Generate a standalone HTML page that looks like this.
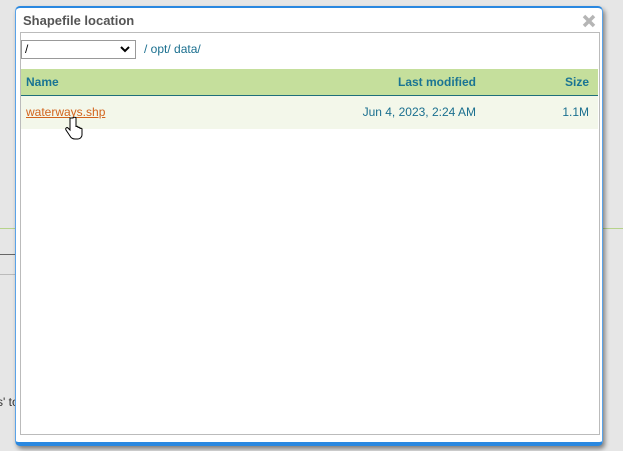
<!DOCTYPE html>
<html><head><style>
body{margin:0;width:623px;height:451px;background:#e6e6e6;position:relative;overflow:hidden;font-family:"Liberation Sans",sans-serif;}
.abs{position:absolute}
.r{text-align:right}
</style></head><body>
<div class="abs" style="left:0;top:228px;width:623px;height:1px;background:#b6d38b"></div>
<div class="abs" style="left:0;top:254px;width:20px;height:1px;background:#666"></div>
<div class="abs" style="left:0;top:274px;width:20px;height:1px;background:#bbb"></div>
<div class="abs" style="left:-3px;top:395px;font-size:12px;color:#333">s' to</div>

<div class="abs" style="left:15px;top:6px;width:586px;height:434px;background:#fff;border-top:2px solid #2a88e0;border-bottom:4px solid #2a88e0;border-left:1px solid #5aa3e8;border-right:1px solid #5aa3e8;border-radius:5px;box-shadow:2px 3px 5px rgba(0,0,0,.45)"></div>
<div class="abs" style="left:23px;top:13px;font-size:13px;font-weight:bold;color:#555">Shapefile location</div>
<svg class="abs" style="left:582px;top:14px" width="14" height="14"><path d="M2 2L12 12M12 2L2 12" stroke="#b5b5b5" stroke-width="3.5"/></svg>
<div class="abs" style="left:20px;top:32px;width:578px;height:401px;border:1px solid #bbb;background:#fff"></div>
<div class="abs" style="left:21px;top:40px;width:113px;height:17px;border:1px solid #999;background:#fff;font-size:12px;line-height:17px;color:#000"><span style="padding-left:3px">/</span>
<svg class="abs" style="left:98px;top:5px" width="10" height="7"><path d="M1 1L5 5L9 1" stroke="#000" stroke-width="2" fill="none"/></svg></div>
<div class="abs" style="left:144px;top:42px;font-size:12px;color:#1a6f8f">/ opt/ data/</div>
<div class="abs" style="left:21px;top:69px;width:577px;height:26px;background:#c5df9c;border-bottom:1px solid #1f6f7a"></div>
<div class="abs" style="left:26px;top:75px;font-size:12px;font-weight:bold;color:#1a7493">Name</div>
<div class="abs r" style="left:276px;width:200px;top:75px;font-size:12px;font-weight:bold;color:#1a7493">Last modified</div>
<div class="abs r" style="left:489px;width:100px;top:75px;font-size:12px;font-weight:bold;color:#1a7493">Size</div>
<div class="abs" style="left:21px;top:96px;width:577px;height:33px;background:#f3f7ea"></div>
<div class="abs" style="left:26px;top:105px;font-size:12px;color:#d2631c;text-decoration:underline">waterways.shp</div>
<div class="abs r" style="left:276px;width:200px;top:105px;font-size:12px;color:#1a6f8f">Jun 4, 2023, 2:24 AM</div>
<div class="abs r" style="left:489px;width:100px;top:105px;font-size:12px;color:#1a6f8f">1.1M</div>
<svg class="abs" style="left:64px;top:116px" width="20" height="26"><path d="M6 2v12l-2-2c-1-1-3 0-2 2l4 6c1 2 3 3 5 3h3c2 0 4-2 4-4v-6c0-1-2-1-2 0v-1c0-1-2-1-2 0v-1c0-1-2-1-2 0V2c0-1-3-1-3 0z" fill="#fff" stroke="#000" stroke-width="1"/></svg>
</body></html>
